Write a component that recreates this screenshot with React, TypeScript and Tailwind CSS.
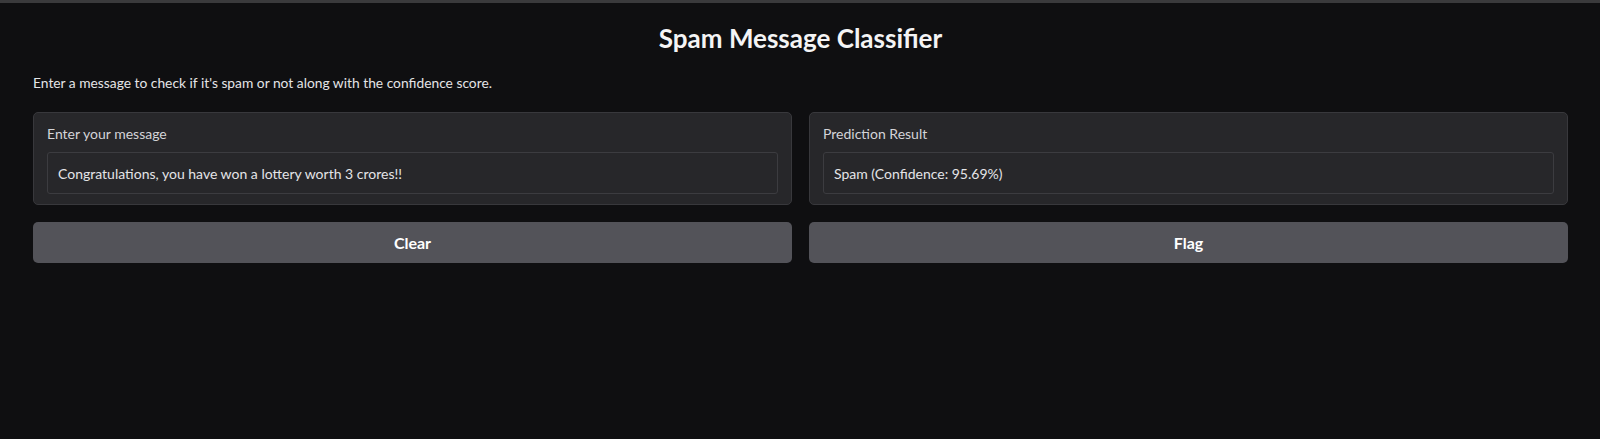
import React from 'react';

const font = { fontFamily: 'Lato, "Noto Sans", sans-serif' };

const Panel: React.FC<{ label: string; value: string }> = ({ label, value }) => (
  <div className="flex-1 rounded-[5px] border border-[#38383c] bg-[#27272a] px-[13px] pt-[11px] pb-[10px]">
    <div className="mb-[8px] text-[14px] leading-[20px] text-[#d4d4d8]">{label}</div>
    <div className="flex h-[42px] items-center rounded-[3px] border border-[#3c3c40] bg-[#27272a] px-[10px] text-[14px] text-[#e4e4e7]">
      {value}
    </div>
  </div>
);

export default function App() {
  return (
    <div className="min-h-[439px] bg-[#0f0f11] text-white" style={font}>
      <div className="h-[3px] bg-[#3a3a3c]" />
      <div className="pl-[33px] pr-[32px]">
        <h1 className="mt-[20px] text-center text-[26px] font-bold leading-[30px] text-[#f4f4f5]">
          Spam Message Classifier
        </h1>
        <p className="mt-[20px] text-[13.8px] leading-[20px] text-[#e4e4e7]">
          Enter a message to check if it's spam or not along with the confidence score.
        </p>
        <div className="mt-[19px] flex gap-[17px]">
          <Panel label="Enter your message" value="Congratulations, you have won a lottery worth 3 crores!!" />
          <Panel label="Prediction Result" value="Spam (Confidence: 95.69%)" />
        </div>
        <div className="mt-[17px] flex gap-[17px]">
          <button className="h-[41px] flex-1 rounded-[5px] bg-[#535359] text-[16px] font-bold text-white">Clear</button>
          <button className="h-[41px] flex-1 rounded-[5px] bg-[#535359] text-[16px] font-bold text-white">Flag</button>
        </div>
      </div>
    </div>
  );
}
